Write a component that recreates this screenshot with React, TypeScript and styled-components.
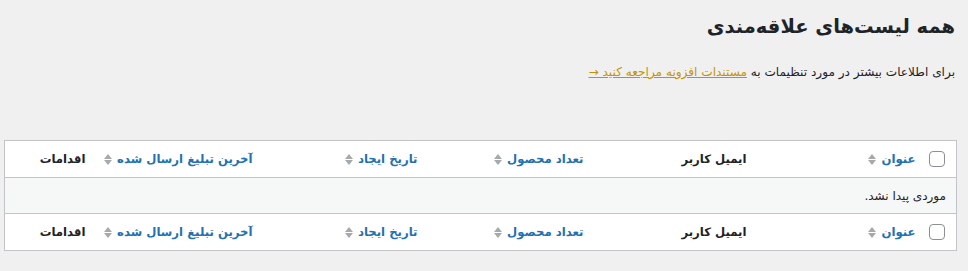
import React from 'react';
import styled, { createGlobalStyle } from 'styled-components';

const Global = createGlobalStyle`
  html, body {
    margin: 0;
    padding: 0;
    background: #f0f0f1;
  }
  body {
    font-family: "DejaVu Sans", "Noto Sans", sans-serif;
    color: #1d2327;
  }
`;

const Wrap = styled.div`
  direction: rtl;
  padding: 10px 11px 20px 4px;
`;

const Title = styled.h1`
  margin: 0;
  padding: 2px 2px 0 0;
  font-size: 19.5px;
  line-height: 30px;
  font-weight: 700;
  color: #1d2327;
`;

const Desc = styled.p`
  margin: 20px 0 0;
  padding-right: 2px;
  font-size: 12.1px;
  line-height: 20px;
  color: #1d2327;
`;

const DocLink = styled.a`
  color: #c49400;
  text-decoration: underline;
`;

const Table = styled.table`
  margin-top: 58px;
  width: 100%;
  border-collapse: collapse;
  table-layout: fixed;
  background: #fff;
  border: 1px solid #c3c4c7;
  font-size: 11.7px;
`;

const Th = styled.th<{ $sortable?: boolean }>`
  text-align: right;
  padding: 0 10px;
  height: 36px;
  font-weight: 700;
  font-size: 11.7px;
  color: ${(p) => (p.$sortable ? '#2271b1' : '#1d2327')};
  white-space: nowrap;
`;

const HeadRow = styled.tr<{ $foot?: boolean }>`
  border-${(p) => (p.$foot ? 'top' : 'bottom')}: 1px solid #c3c4c7;
`;

const SortLabel = styled.span`
  display: inline-flex;
  align-items: center;
  gap: 5px;
`;

const Arrows = styled.span`
  display: inline-flex;
  flex-direction: column;
  gap: 1px;
  color: #a7aaad;
`;

const CheckCell = styled.th`
  padding: 0 11px 0 0;
  height: 36px;
  text-align: right;
`;

const Box = styled.span`
  display: inline-block;
  width: 14px;
  height: 14px;
  border: 1px solid #8c8f94;
  border-radius: 4px;
  background: #fff;
  vertical-align: middle;
`;

const EmptyCell = styled.td`
  background: #f6f7f7;
  height: 35px;
  padding: 0 10px;
  font-size: 12px;
  color: #1d2327;
`;

function SortIcon() {
  return (
    <Arrows>
      <svg width="8" height="5" viewBox="0 0 8 5">
        <path d="M4 0 L8 5 L0 5 Z" fill="currentColor" />
      </svg>
      <svg width="8" height="5" viewBox="0 0 8 5">
        <path d="M0 0 L8 0 L4 5 Z" fill="currentColor" />
      </svg>
    </Arrows>
  );
}

const columns: { label: string; sortable: boolean }[] = [
  { label: 'عنوان', sortable: true },
  { label: 'ایمیل کاربر', sortable: false },
  { label: 'تعداد محصول', sortable: true },
  { label: 'تاریخ ایجاد', sortable: true },
  { label: 'آخرین تبلیغ ارسال شده', sortable: true },
  { label: 'اقدامات', sortable: false },
];

function HeaderCells() {
  return (
    <>
      <CheckCell>
        <Box />
      </CheckCell>
      {columns.map((c) => (
        <Th key={c.label} $sortable={c.sortable}>
          {c.sortable ? (
            <SortLabel>
              {c.label}
              <SortIcon />
            </SortLabel>
          ) : (
            c.label
          )}
        </Th>
      ))}
    </>
  );
}

export default function App() {
  return (
    <>
      <Global />
      <Wrap>
        <Title>همه لیست‌های علاقه‌مندی</Title>
        <Desc>
          برای اطلاعات بیشتر در مورد تنظیمات به{' '}
          <DocLink href="#">مستندات افزونه مراجعه کنید →</DocLink>
        </Desc>
        <Table>
          <colgroup>
            <col style={{ width: 31 }} />
            <col style={{ width: 169 }} />
            <col style={{ width: 163 }} />
            <col style={{ width: 166 }} />
            <col style={{ width: 165 }} />
            <col style={{ width: 167 }} />
            <col />
          </colgroup>
          <thead>
            <HeadRow>
              <HeaderCells />
            </HeadRow>
          </thead>
          <tbody>
            <tr>
              <EmptyCell colSpan={7}>موردی پیدا نشد.</EmptyCell>
            </tr>
          </tbody>
          <tfoot>
            <HeadRow $foot>
              <HeaderCells />
            </HeadRow>
          </tfoot>
        </Table>
      </Wrap>
    </>
  );
}
